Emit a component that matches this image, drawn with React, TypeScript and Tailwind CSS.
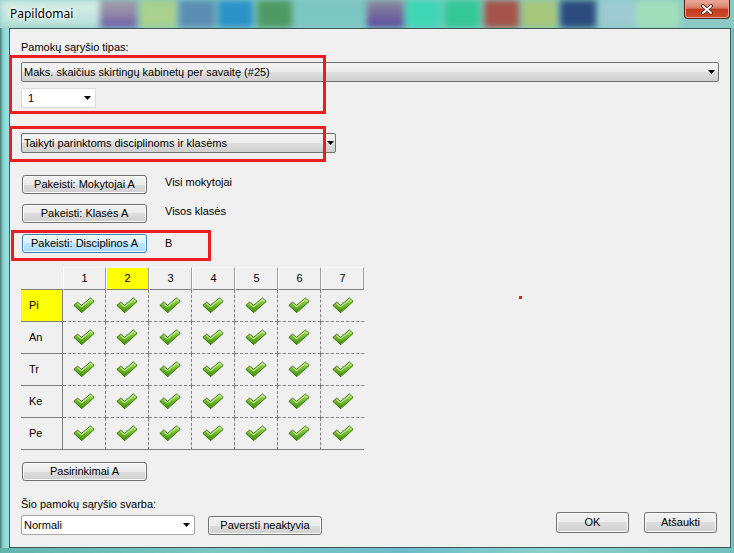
import React from 'react';

const rows = ['Pi', 'An', 'Tr', 'Ke', 'Pe'];
const cols = [1, 2, 3, 4, 5, 6, 7];

// blurred glass blocks behind the title bar
const glass = [
	{ w: 100, c: 'bg-[linear-gradient(#d8efe8,#b6e0d8)]' },
	{ w: 37, c: 'bg-[linear-gradient(#a0a0a8,#9088a8_50%,#6a58a8)]' },
	{ w: 3, c: 'bg-[#86cac4]' },
	{ w: 36, c: 'bg-[#a9d08c]' },
	{ w: 3, c: 'bg-[#86cac4]' },
	{ w: 36, c: 'bg-[#5b8db2]' },
	{ w: 3, c: 'bg-[#86cac4]' },
	{ w: 35, c: 'bg-[#2b92c8]' },
	{ w: 4, c: 'bg-[#86cac4]' },
	{ w: 35, c: 'bg-[#4f9a64]' },
	{ w: 75, c: 'bg-[#7cc6c2]' },
	{ w: 37, c: 'bg-[linear-gradient(#8c8c9a,#5a4aa0)]' },
	{ w: 2, c: 'bg-[#86cac4]' },
	{ w: 35, c: 'bg-[#3fd6b6]' },
	{ w: 3, c: 'bg-[#86cac4]' },
	{ w: 36, c: 'bg-[#34c896]' },
	{ w: 4, c: 'bg-[#86cac4]' },
	{ w: 35, c: 'bg-[#a4544a]' },
	{ w: 3, c: 'bg-[#86cac4]' },
	{ w: 35, c: 'bg-[#a6c67a]' },
	{ w: 3, c: 'bg-[#86cac4]' },
	{ w: 36, c: 'bg-[#2b4b7e]' },
	{ w: 3, c: 'bg-[#86cac4]' },
	{ w: 37, c: 'bg-[#9ccbd2]' },
	{ w: 44, c: 'bg-[#a2deba]' },
	{ w: 54, c: 'bg-[#8ccac4]' },
];

const Arrow = () => (
	<svg width="7" height="4" viewBox="0 0 7 4" className="shrink-0">
		<path d="M0 0h7L3.5 4z" fill="#000" />
	</svg>
);

const Check = () => (
	<svg width="22" height="17" viewBox="0 0 22 17">
		<defs>
			<linearGradient id="chk" x1="0" y1="0" x2="0" y2="1">
				<stop offset="0" stopColor="#a8e05a" />
				<stop offset="0.45" stopColor="#72c02a" />
				<stop offset="1" stopColor="#3f8c0e" />
			</linearGradient>
		</defs>
		<path
			d="M0.9 8.4L4.6 5.1L8.6 8.4L17.4 1L21.2 4.4L8.7 15.6Z"
			fill="url(#chk)"
			stroke="#3a7412"
			strokeWidth="1"
			strokeLinejoin="round"
		/>
		<path d="M4.6 6.4L8.6 9.7L17.4 2.4L19.6 4.4" fill="none" stroke="#e8f8c4" strokeOpacity="0.75" strokeWidth="1.1" />
	</svg>
);

type IBtnProps = {
	label: string;
	className?: string;
	hot?: boolean;
};

const Btn = ({ label, className = '', hot = false }: IBtnProps) => (
	<div
		className={`flex shrink-0 items-center justify-center rounded-[3px] border shadow-[inset_0_0_0_1px_#fbfbfb] ${
			hot
				? 'border-[#3c7fb1] bg-[linear-gradient(#eaf6fd,#d9f0fc_50%,#bee6fd_50%,#a7d9f5)]'
				: 'border-[#707070] bg-[linear-gradient(#f2f2f2,#ebebeb_50%,#dddddd_50%,#cfcfcf)]'
		} ${className}`}
	>
		{label}
	</div>
);

export default function App() {
	return (
		<div className="relative h-[553px] w-[734px] overflow-hidden bg-[#7cc6c2] font-['Liberation_Sans',Arial,sans-serif] text-[11px] leading-[13px] text-black">
			{/* title bar */}
			<div className="relative h-[28px] overflow-hidden bg-[#86cac4]">
				<div className="flex h-full [filter:blur(3px)]">
					{glass.map((g, i) => (
						<div key={i} style={{ width: g.w }} className={`h-full shrink-0 ${g.c}`} />
					))}
				</div>
				<div className="absolute left-[10px] top-[6px] font-['Noto_Sans',sans-serif] text-[12px] leading-[16px] text-black [text-shadow:0_0_6px_#fff,0_0_4px_#fff,0_0_2px_#fff]">
					Papildomai
				</div>
				<div className="absolute left-[684px] top-0 flex h-[19px] w-[46px] items-center justify-center rounded-b-[4px] border border-t-0 border-[#5a1e14] bg-[linear-gradient(#eab0a0,#d67a66_45%,#c23a20_52%,#cc5030)] shadow-[inset_0_0_0_1px_#f0a090]">
					<svg width="12" height="11" viewBox="0 0 12 11">
						<path d="M2 2L10 9M10 2L2 9" stroke="#4a2418" strokeWidth="3.6" strokeLinecap="round" />
						<path d="M2 2L10 9M10 2L2 9" stroke="#fff" strokeWidth="2" strokeLinecap="round" />
					</svg>
				</div>
			</div>

			<div className="flex h-[520px]">
				<div className="w-[9px] shrink-0 bg-[linear-gradient(90deg,#4d7a70,#88d4d4_35%,#9ee2e2)]" />
				{/* client area */}
				<div className="flex w-[722px] shrink-0 flex-col border border-[#3d5656] bg-[#f0f0f0] pl-[11px] pr-[13px] pt-[12px]">
					<div>Pamokų sąryšio tipas:</div>
					<div className="mt-[8px] flex h-[20px] w-[698px] items-center justify-between rounded-[2px] border border-[#707070] bg-[linear-gradient(#f3f3f3,#ececec_50%,#dedede_50%,#d0d0d0)] pl-[2px] pr-[3px]">
						<span>Maks. skaičius skirtingų kabinetų per savaitę (#25)</span>
						<Arrow />
					</div>
					<div className="mt-[6px] flex h-[20px] w-[75px] items-center justify-between border border-[#dcdcdc] bg-white pl-[6px] pr-[4px]">
						<span>1</span>
						<Arrow />
					</div>
					<div className="mt-[25px] flex h-[20px] w-[315px] items-center justify-between rounded-[2px] border border-[#707070] bg-[linear-gradient(#f3f3f3,#ececec_50%,#dedede_50%,#d0d0d0)] pl-[2px] pr-[1px]">
						<span>Taikyti parinktoms disciplinoms ir klasėms</span>
						<Arrow />
					</div>

					<div className="mt-[22px] flex items-start">
						<Btn label="Pakeisti: Mokytojai A" className="ml-[1px] h-[19px] w-[125px]" />
						<span className="ml-[18px] mt-[1px]">Visi mokytojai</span>
					</div>
					<div className="mt-[10px] flex items-start">
						<Btn label="Pakeisti: Klasės A" className="ml-[1px] h-[19px] w-[125px]" />
						<span className="ml-[18px] mt-[1px]">Visos klasės</span>
					</div>
					<div className="mt-[11px] flex items-start">
						<Btn label="Pakeisti: Disciplinos A" hot className="ml-[1px] h-[19px] w-[125px]" />
						<span className="ml-[18px] mt-[3px]">B</span>
					</div>

					{/* grid */}
					<div className="mt-[14px] grid w-[343px] grid-cols-[42px_repeat(7,43px)] grid-rows-[23px_repeat(5,32px)]">
						<div className="border-b border-[#808080]" />
						{cols.map((c) => (
							<div
								key={c}
								className={`flex items-center justify-center border-b border-l border-r border-t border-b-[#808080] border-l-white border-r-[#a0a0a0] border-t-white ${
									c === 2 ? 'bg-[#ffff00]' : ''
								}`}
							>
								{c}
							</div>
						))}
						{rows.map((r, ri) => (
							<React.Fragment key={r}>
								<div
									className={`flex items-center border-b border-r border-[#808080] pl-[8px] ${
										ri === 0 ? 'bg-[#ffff00]' : ''
									}`}
								>
									{r}
								</div>
								{cols.map((c) => (
									<div
										key={c}
										className={`flex items-center justify-center border-b border-[#808080] ${
											ri === rows.length - 1 ? 'border-solid' : 'border-dashed'
										} ${c < 7 ? 'border-r border-r-[#808080] [border-right-style:dashed]' : ''}`}
									>
										<Check />
									</div>
								))}
							</React.Fragment>
						))}
					</div>

					<Btn label="Pasirinkimai A" className="ml-[1px] mt-[12px] h-[19px] w-[125px]" />
					<div className="mt-[17px]">Šio pamokų sąryšio svarba:</div>
					<div className="mt-[4px] flex items-start">
						<div className="flex h-[20px] w-[174px] items-center justify-between rounded-[2px] border border-[#a5a5a5] bg-white pl-[2px] pr-[4px]">
							<span>Normali</span>
							<Arrow />
						</div>
						<Btn label="Paversti neaktyvia" className="ml-[13px] mt-[1px] h-[19px] w-[114px]" />
						<Btn label="OK" className="-mt-[3px] ml-auto h-[21px] w-[73px]" />
						<Btn label="Atšaukti" className="-mt-[3px] ml-[15px] h-[21px] w-[73px]" />
					</div>
				</div>
				<div className="w-[3px] shrink-0 bg-[linear-gradient(90deg,#8ad0cc,#5eaeb0)]" />
			</div>
			<div className="h-[5px] bg-[linear-gradient(90deg,#62b4ac,#7cc8c4_30%,#6cbccc_55%,#8ad2cc_75%,#70c0bc)]" />

			{/* annotation overlays */}
			<div className="absolute left-[9px] top-[55px] h-[59px] w-[317px] border-[3px] border-[#ec1c24]" />
			<div className="absolute left-[9px] top-[126px] h-[36px] w-[317px] border-[3px] border-[#ec1c24]" />
			<div className="absolute left-[11px] top-[230px] h-[31px] w-[200px] border-[3px] border-[#ec1c24]" />
			<div className="absolute left-[519px] top-[296px] h-[3px] w-[3px] bg-[#ec1c24]" />
		</div>
	);
}
